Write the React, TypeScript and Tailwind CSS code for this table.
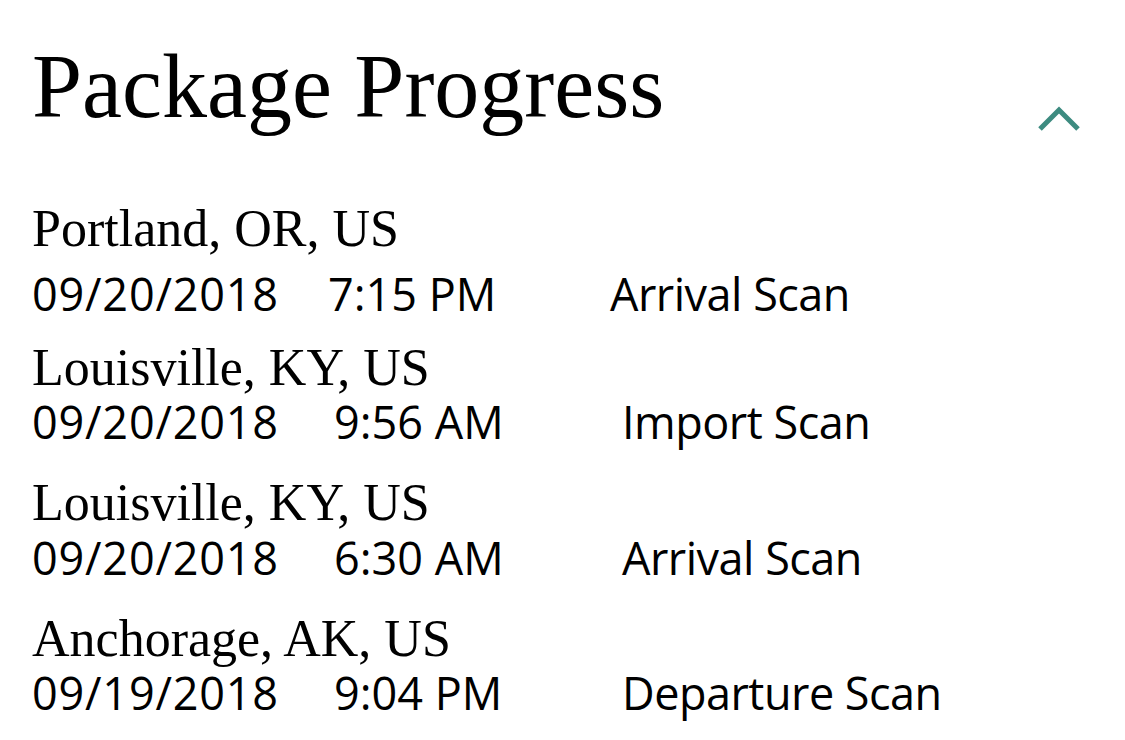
import React from 'react'

interface ScanEvent {
  place: string
  date: string
  time: string
  activity: string
}

const events: ScanEvent[] = [
  { place: 'Portland, OR, US', date: '09/20/2018', time: '7:15 PM', activity: 'Arrival Scan' },
  { place: 'Louisville, KY, US', date: '09/20/2018', time: '9:56 AM', activity: 'Import Scan' },
  { place: 'Louisville, KY, US', date: '09/20/2018', time: '6:30 AM', activity: 'Arrival Scan' },
  { place: 'Anchorage, AK, US', date: '09/19/2018', time: '9:04 PM', activity: 'Departure Scan' },
]

const serif = "font-['Liberation_Serif','Times_New_Roman',serif]"
const sans = "font-['Open_Sans','Noto_Sans',sans-serif]"

// spacing above each row, and between place and date line
const rowGap = ['mt-[66px]', 'mt-[26px]', 'mt-[33px]', 'mt-[33px]']
const lineGap = ['mt-[16px]', 'mt-[5px]', 'mt-[6px]', 'mt-[5px]']

function ScanRow({ event, index }: { event: ScanEvent; index: number }) {
  const latest = index === 0
  return (
    <div className={rowGap[index]}>
      <p className={`${serif} text-[52px] leading-[52px] text-black`}>{event.place}</p>
      <div className={`${sans} flex text-[45px] leading-[45px] text-black ${lineGap[index]}`}>
        <span className={`tracking-[0.8px] ${latest ? 'w-[296px]' : 'w-[302px]'}`}>{event.date}</span>
        <span className={latest ? 'w-[282px]' : 'w-[288px]'}>{event.time}</span>
        <span className="tracking-[-0.5px]">{event.activity}</span>
      </div>
    </div>
  )
}

export default function App() {
  return (
    <div className="min-h-[740px] w-[1125px] bg-white pl-[32px] pr-[42px] pt-[37px]">
      {/* Header */}
      <div className="flex items-start justify-between">
        <h1 className={`${serif} text-[90px] leading-[100px] text-black`}>Package Progress</h1>
        <svg width="48" height="32" viewBox="0 0 48 32" className="mt-[65px]" fill="none">
          <polyline points="5,27 24,8 43,27" stroke="#3d8b80" strokeWidth="5" />
        </svg>
      </div>

      {/* Scan history */}
      <div>
        {events.map((event, i) => (
          <ScanRow key={i} event={event} index={i} />
        ))}
      </div>
    </div>
  )
}
